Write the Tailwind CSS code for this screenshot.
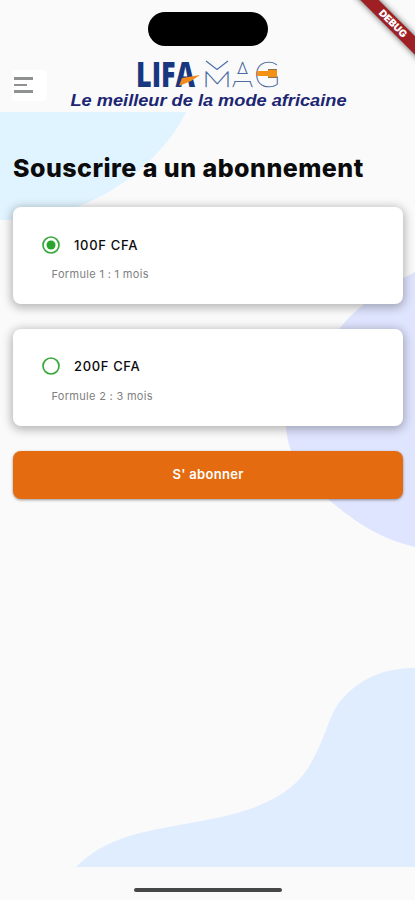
<!DOCTYPE html>
<html lang="fr">
<head>
    <meta charset="UTF-8">
    <meta name="viewport" content="width=device-width, initial-scale=1.0">
    <title>Lifa Mag - Abonnement</title>
    <script src="https://cdn.jsdelivr.net/npm/@tailwindcss/browser@4"></script>
</head>
<body class="bg-[#fafafa] font-['Inter',sans-serif] text-[#0b0b0b]">
    <div class="relative isolate flex h-[900px] w-[415px] flex-col overflow-hidden">

        <!-- Background shapes -->
        <svg class="absolute inset-0 -z-10" width="415" height="900" viewBox="0 0 415 900">
            <path d="M0 112H186C178 130 162 150 140 170C100 203 55 220 0 220Z" fill="#e0f4ff"/>
            <path d="M415 272C385 287 358 305 340 328C312 352 286 390 286 426C287 454 304 480 328 499C352 520 380 539 415 547Z" fill="#e0e5ff"/>
            <path d="M76 867C95 848 116 839 140 833C178 824 218 820 250 809C277 799 294 788 306 771C328 738 327 713 345 696C363 677 386 668 415 668V867Z" fill="#e0edff"/>
        </svg>

        <!-- Header -->
        <header class="flex h-28 flex-none flex-col">
            <div class="mx-auto mt-3 h-[34px] w-[120px] flex-none rounded-full bg-black"></div>
            <div class="mt-3 flex">
                <button class="mt-3 ml-3 flex h-[31px] w-[35px] flex-none flex-col gap-1 rounded bg-white pt-[7px] pl-[2px]" aria-label="Menu">
                    <span class="h-[2.5px] w-[19px] bg-[#8f9291]"></span>
                    <span class="h-[2.5px] w-[13px] bg-[#8f9291]"></span>
                    <span class="h-[2.5px] w-[19px] bg-[#8f9291]"></span>
                </button>
                <svg class="ml-[23px] overflow-visible" width="280" height="54" viewBox="70 58 280 54">
                    <text x="136" y="87" textLength="59" lengthAdjust="spacingAndGlyphs" font-family="Open Sans, sans-serif" font-weight="800" font-size="36" fill="#183780">LIFA</text>
                    <path d="M179 86L182 78L200 75L191 81Z" fill="#f18a1b"/>

                    <g font-family="Lato, sans-serif" font-weight="100" fill="#4d6ea5" stroke="#4d6ea5" stroke-width=".5">
                        <text x="202" y="86.500" textLength="30" lengthAdjust="spacingAndGlyphs" font-size="22">M</text>
                        <text x="232" y="86.500" textLength="21" lengthAdjust="spacingAndGlyphs" font-size="36">A</text>
                        <text x="254" y="86.500" textLength="26" lengthAdjust="spacingAndGlyphs" font-size="36">G</text>
                    </g>
                    <path d="M206 61L217 69.500L228 61" fill="none" stroke="#4d6ea5" stroke-width="1.200"/>
                    <path d="M231 74H254V81H231Z" fill="#fafafa"/>
                    <path d="M237.500 73.500H247.500M234.500 81.500H250.500" stroke="#4d6ea5"/>
                    <path d="M257 71H268V69H277V78H268V76H257Z" fill="#f39215"/>
                    <path d="M268 69.500H277M268 77.500H277" stroke="#8a7250"/>

                    <text x="70.500" y="105.500" textLength="276" lengthAdjust="spacingAndGlyphs" font-family="Liberation Sans, sans-serif" font-weight="700" font-style="italic" font-size="17" fill="#1c2672">Le meilleur de la mode africaine</text>
                </svg>
            </div>
        </header>

        <!-- Subscription form -->
        <main class="flex flex-1 flex-col pr-3 pl-[13px]">
            <h1 class="mt-10 text-[25px] leading-8 font-extrabold tracking-[0.47px] whitespace-nowrap">Souscrire a un abonnement</h1>

            <label class="mt-[23px] flex h-[97px] flex-none flex-col rounded-lg bg-white pt-7 pl-[29px] shadow-[0_2px_10px_2px_rgba(0,0,0,0.27)]">
                <span class="flex items-center gap-[14px]">
                    <svg width="18" height="18" viewBox="0 0 18 18" fill="none">
                        <circle cx="9" cy="9" r="8" stroke="#38a83c" stroke-width="1.700"/>
                        <circle cx="9" cy="9" r="4.500" fill="#27a52c"/>
                    </svg>
                    <span class="text-[13px] leading-5 font-medium tracking-[0.7px]">100F CFA</span>
                </span>
                <span class="mt-[11px] ml-[9.5px] text-[11px] leading-4 tracking-[0.33px] text-[#808080]">Formule 1 : 1 mois</span>
            </label>

            <label class="mt-[25px] flex h-[97px] flex-none flex-col rounded-lg bg-white pt-7 pl-[29px] shadow-[0_2px_10px_2px_rgba(0,0,0,0.27)]">
                <span class="-mt-px flex items-center gap-[14px]">
                    <svg width="18" height="18" viewBox="0 0 18 18" fill="none">
                        <circle cx="9" cy="9" r="8" stroke="#38a83c" stroke-width="1.700"/>
                    </svg>
                    <span class="text-[13px] leading-5 font-medium tracking-[0.65px]">200F CFA</span>
                </span>
                <span class="mt-3 ml-[9.5px] text-[11px] leading-4 tracking-[0.3px] text-[#808080]">Formule 2 : 3 mois</span>
            </label>

            <button class="mt-[25px] h-12 flex-none rounded-lg bg-[#e46b10] text-[13px] font-semibold tracking-[0.3px] text-white shadow-[0_1px_3px_rgba(0,0,0,0.4)]">S' abonner</button>
        </main>

        <div class="mx-auto mb-2 h-1 w-[148px] flex-none rounded-full bg-[#444746]"></div>

        <!-- Debug ribbon -->
        <div class="absolute top-[16.5px] left-[332.5px] flex h-[13px] w-[120px] rotate-45 items-center justify-center bg-[#9f2024] text-[10px] font-black text-white shadow-[0_0_6px_rgba(0,0,0,0.65)]">DEBUG</div>
    </div>
</body>
</html>
